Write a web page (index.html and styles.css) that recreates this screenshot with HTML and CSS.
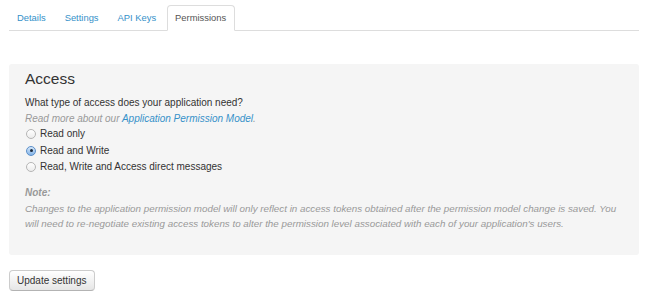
FILE: index.html
```html
<!DOCTYPE html>
<html>
<head>
<meta charset="utf-8">
<link rel="stylesheet" href="styles.css">
</head>
<body>
<div class="page">
  <ul class="tabs">
    <li class="tab"><a href="#">Details</a></li>
    <li class="tab"><a href="#">Settings</a></li>
    <li class="tab"><a href="#">API Keys</a></li>
    <li class="tab active"><a href="#">Permissions</a></li>
  </ul>
  <div class="panel">
    <h2 class="title">Access</h2>
    <p class="question">What type of access does your application need?</p>
    <p class="more">Read more about our <a href="#">Application Permission Model</a>.</p>
    <label class="option"><span class="radio"></span>Read only</label>
    <label class="option"><span class="radio checked"></span>Read and Write</label>
    <label class="option"><span class="radio"></span>Read, Write and Access direct messages</label>
    <p class="note-title">Note:</p>
    <p class="note">Changes to the application permission model will only reflect in access tokens obtained after the permission model change is saved. You will need to re-negotiate existing access tokens to alter the permission level associated with each of your application's users.</p>
  </div>
  <button class="btn">Update settings</button>
</div>
</body>
</html>
```
FILE: styles.css
```css
* { box-sizing: border-box; }
body {
  margin: 0;
  font-family: "Liberation Sans", Arial, sans-serif;
  color: #333;
  background: #fff;
}
.page { padding: 5px 9px 0 9px; }
.tabs {
  list-style: none;
  margin: 0;
  padding: 0;
  display: flex;
  border-bottom: 1px solid #ddd;
  height: 26px;
}
.tab { margin-right: 2px; }
.tab a {
  display: block;
  height: 26px;
  padding: 0 8px 0 7px;
  line-height: 24px;
  font-size: 9.4px;
  color: #3591c9;
  text-decoration: none;
  border: 1px solid transparent;
  border-radius: 4px 4px 0 0;
}
.tab.active a {
  color: #555;
  background: #fff;
  border-color: #ddd #ddd transparent #ddd;
}
.panel {
  margin-top: 33px;
  background: #f5f5f5;
  border-radius: 3px;
  padding: 5px 16px 23px 16px;
  width: 630px;
}
.title {
  margin: 0 0 6px 0;
  font-weight: normal;
  font-size: 15.5px;
  line-height: 20px;
  color: #333;
}
.question {
  margin: 0 0 1px 0;
  font-size: 10px;
  line-height: 16px;
}
.more {
  margin: 0;
  font-size: 10px;
  line-height: 14px;
  font-style: italic;
  color: #999;
}
.more a { color: #3591c9; text-decoration: none; }
.option {
  display: flex;
  align-items: center;
  font-size: 10px;
  line-height: 16.5px;
  color: #333;
}
.radio {
  width: 10px;
  height: 10px;
  border-radius: 50%;
  border: 1px solid #b5b5b5;
  background: linear-gradient(#fff, #ececec);
  margin: 0 4px 0 1px;
  position: relative;
}
.radio.checked {
  border-color: #5b8fc9;
  background: linear-gradient(#d6e7f9, #82b3e8);
}
.radio.checked::after {
  content: "";
  position: absolute;
  left: 2.5px;
  top: 2.5px;
  width: 3px;
  height: 3px;
  border-radius: 50%;
  background: #1d2b3c;
}
.note-title {
  margin: 9px 0 0 0;
  font-size: 10px;
  line-height: 16px;
  font-weight: bold;
  font-style: italic;
  color: #999;
}
.note {
  margin: 0;
  font-size: 9.8px;
  line-height: 15.5px;
  font-style: italic;
  color: #999;
}
.btn {
  margin-top: 15px;
  display: block;
  height: 21px;
  padding: 0 7px;
  font-family: "Liberation Sans", Arial, sans-serif;
  font-size: 10px;
  color: #333;
  background: linear-gradient(#fff, #e6e6e6);
  border: 1px solid #ccc;
  border-bottom-color: #b3b3b3;
  border-radius: 4px;
}
```
